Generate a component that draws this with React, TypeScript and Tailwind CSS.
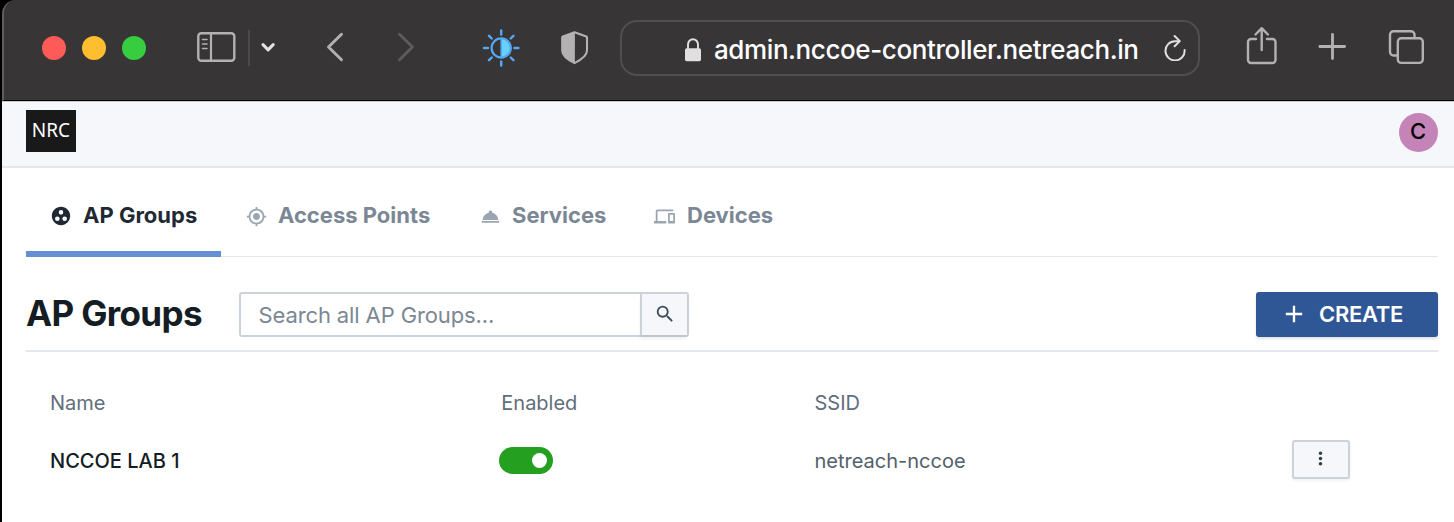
import type { ReactNode } from "react";
import {
  MdAdd,
  MdDevices,
  MdGpsFixed,
  MdGroupWork,
  MdMoreVert,
  MdRoomService,
  MdSearch,
} from "react-icons/md";

function BrowserBar() {
  return (
    <div className="flex h-[101px] items-start overflow-hidden rounded-tl-[14px] border-b border-l-2 border-b-black border-l-[#5f5d5e] bg-[#383536]">
      <div className="mt-9 ml-[38px] flex gap-4">
        <span className="size-6 rounded-full bg-[#fe5b58]" />
        <span className="size-6 rounded-full bg-[#febe30]" />
        <span className="size-6 rounded-full bg-[#36cd41]" />
      </div>
      <svg className="mt-8 ml-[51px] h-[30px] w-[39px] shrink-0" viewBox="0 0 39 30" fill="none" stroke="#b4b1b2">
        <rect x="1.3" y="1.3" width="36" height="27.4" rx="3" strokeWidth="2.4" />
        <path d="M14 1v28" strokeWidth="2.2" />
        <path d="M5.500 7.500h4.500M5.500 12h4.500M5.500 16.500h4.500" strokeWidth="1.600" strokeLinecap="round" />
      </svg>
      <span className="mt-[30px] ml-3 h-9 w-0.5 bg-[#4b494a]" />
      <svg className="mt-[42px] ml-[11px] h-[11px] w-[15px] shrink-0" viewBox="0 0 15 11" fill="none" stroke="#e4e2e3" strokeWidth="3" strokeLinecap="round" strokeLinejoin="round">
        <path d="M2 2.600 7.100 7.900 12.200 2.600" />
      </svg>
      <svg className="mt-8 ml-[49px] h-[30px] w-[19px] shrink-0" viewBox="0 0 19 30" fill="none" stroke="#b4b1b2" strokeWidth="2.900" strokeLinecap="round" strokeLinejoin="round">
        <path d="M16.500 2.200 3.500 15l13 12.800" />
      </svg>
      <svg className="mt-8 ml-[53px] h-[30px] w-[19px] shrink-0" viewBox="0 0 19 30" fill="none" stroke="#5d5b5c" strokeWidth="2.900" strokeLinecap="round" strokeLinejoin="round">
        <path d="M2.500 2.200 15.500 15 2.500 27.800" />
      </svg>
      <svg className="mt-[29px] ml-[66px] h-[38px] w-[38px] shrink-0" viewBox="0 0 38 38" fill="none" stroke="#55a8f2" strokeWidth="2.200">
        <path d="M19.200 9a10 10 0 0 1 0 20z" fill="#66d0ff" stroke="none" />
        <circle cx="19.200" cy="19" r="9.600" />
        <path d="M19.200 9v20" strokeWidth="1.600" />
        <path d="M19.200 1.500v4M19.200 32.500v4M2 19h4M32.400 19h4M7 6.800l2.700 2.700M28.700 28.500l2.700 2.700M7 31.200l2.700-2.700M28.700 9.500l2.700-2.700" strokeWidth="2.400" strokeLinecap="round" />
      </svg>
      <svg className="mt-[30px] ml-10 h-[35px] w-[29px] shrink-0" viewBox="0 0 29 35">
        <path d="M14.500 2.200 26.300 6.400q.7.300.7 1v13.200c0 5.600-6 9.400-12.500 12.500-6.500-3.100-12.300-6.900-12.300-12.500V7.400q0-.7.700-1z" fill="none" stroke="#b4b1b2" strokeWidth="2.100" strokeLinejoin="round" />
        <path d="M14.900 2.200 2.400 6.600V21c0 5 6 9 12.500 12z" fill="#b4b1b2" />
      </svg>
      <div className="mt-5 ml-[31px] flex h-14 w-[580px] shrink-0 items-start rounded-[17px] border-2 border-[#504e4f]">
        <svg className="mt-4 ml-[63px] h-6 w-4 shrink-0" viewBox="0 0 16 24">
          <path d="M3 12V6.500a5 5.300 0 0 1 10 0V12" fill="none" stroke="#e1dfe0" strokeWidth="1.900" />
          <rect x="0" y="10.300" width="16" height="13" rx="1.700" fill="#e1dfe0" />
        </svg>
        <span className="mt-[11px] ml-[13px] w-[428px] text-[26px] leading-[34px] font-medium tracking-[-0.4px] whitespace-nowrap text-white">
          admin.nccoe-controller.netreach.in
        </span>
        <svg className="mt-[13px] ml-[22px] h-[26px] w-[22px] shrink-0" viewBox="0 0 22 26" fill="none" stroke="#e1dfe0" strokeWidth="2" strokeLinecap="round" strokeLinejoin="round">
          <path d="M14 6.200H11A9.600 9.600 0 1 0 20.600 15" />
          <path d="M10.600 1 15.800 6.100 10.600 11.300" />
        </svg>
      </div>
      <svg className="mt-[26px] ml-[46px] h-[39px] w-[31px] shrink-0" viewBox="0 0 31 39" fill="none" stroke="#b4b1b2" strokeWidth="2.400" strokeLinecap="round" strokeLinejoin="round">
        <path d="M10 13H5a3 3 0 0 0-3 3v18a3 3 0 0 0 3 3h21.500a3 3 0 0 0 3-3V16a3 3 0 0 0-3-3H21" />
        <path d="M15.700 24V2.500M9.500 8.500l6.200-6.300 6.200 6.300" />
      </svg>
      <svg className="mt-[33px] ml-[41px] h-[27px] w-[28px] shrink-0" viewBox="0 0 28 27" fill="none" stroke="#b4b1b2" strokeWidth="2.800" strokeLinecap="round">
        <path d="M14.500 1.500v24M1.800 13.500h24.800" />
      </svg>
      <svg className="mt-[29px] ml-[42px] h-9 w-9 shrink-0" viewBox="0 0 36 36" fill="none" stroke="#b4b1b2" strokeWidth="2.400">
        <path d="M9 26.500H5.500A3.500 3.500 0 0 1 2 23V5.700A3.500 3.500 0 0 1 5.500 2.200H23a3.500 3.500 0 0 1 3.500 3.500V9" />
        <rect x="9.800" y="9.300" width="25" height="24.600" rx="3.500" />
      </svg>
    </div>
  );
}

function Tab({ icon, label, className }: { icon: ReactNode; label: string; className: string }) {
  return (
    <div className={"flex items-start gap-[11px] " + className}>
      {icon}
      <span className="mt-8 text-[22px] leading-[30px] font-bold whitespace-nowrap">{label}</span>
    </div>
  );
}

export default function App() {
  return (
    <div className="h-[522px] w-[1454px] overflow-hidden bg-black pl-0.5 font-['Inter',sans-serif]">
      <BrowserBar />
      <div className="h-[421px] bg-white">
        <header className="flex h-[67px] items-start justify-between border-t border-b-2 border-t-[#c9cacd] border-b-[#e4e7eb] bg-[#f5f7fb] pr-4 pl-6">
          <div className="mt-2 h-[42px] w-[50px] bg-[#191919] text-center font-['Noto_Sans',sans-serif] text-[19px] leading-[41px] text-white">
            NRC
          </div>
          <div className="mt-[11px] size-[39px] rounded-full bg-[#c584b8] pr-px text-center text-[22px] leading-[37px] font-medium text-black">
            C
          </div>
        </header>

        <nav className="mr-4 ml-6 flex h-[89px] border-b border-[#e4e7e9] text-[#7b8794]">
          <Tab
            icon={<MdGroupWork className="mt-[37px] size-[22px]" />}
            label="AP Groups"
            className="h-[89px] w-[195px] border-b-6 border-[#668ed1] pl-6 text-[#1f2933]"
          />
          <Tab
            icon={<MdGpsFixed className="mt-[38px] size-[21px] text-[#9aa5b1]" />}
            label="Access Points"
            className="w-[234px] pl-[25px]"
          />
          <Tab
            icon={<MdRoomService className="mt-[38px] size-[21px] text-[#9aa5b1]" />}
            label="Services"
            className="w-[174px] pl-[25px]"
          />
          <Tab
            icon={<MdDevices className="mt-[38px] mr-px size-[21px] text-[#9aa5b1]" />}
            label="Devices"
            className="pl-[25px]"
          />
        </nav>

        <div className="mr-4 ml-6 flex h-[95px] items-start border-b-2 border-[#e4e7eb] pt-[35px]">
          <h1 className="w-[213px] text-[35px] leading-[43px] font-bold tracking-[-0.65px] whitespace-nowrap text-[#141c24]">
            AP Groups
          </h1>
          <div className="flex h-[45px] w-[450px] rounded-[3px] border-2 border-[#cbd2d9]">
            <div className="w-[399px] pl-[17.5px] text-[22px] leading-[42px] tracking-[-0.12px] text-[#7b8794]">
              Search all AP Groups...
            </div>
            <button className="flex flex-1 justify-center border-l-2 border-[#cbd2d9] bg-[#f5f7fa] pt-[9px] text-[#3e4c59] shadow-[0_4px_3px_rgba(0,0,0,0.06)]">
              <MdSearch className="size-[22px]" />
            </button>
          </div>
          <button className="ml-auto flex h-[45px] w-[182px] items-start rounded-[3px] bg-[#305795] pl-6 text-[22px] font-semibold text-white shadow-[0_2px_3px_rgba(0,0,0,0.12)]">
            <MdAdd className="mt-2 size-7" />
            <span className="ml-[11px] leading-[44px] tracking-[-0.3px]">CREATE</span>
          </button>
        </div>

        <div className="grid grid-cols-[451px_313.5px_477.5px_1fr] pt-[36px] pl-12 text-[20px]">
          <div className="h-[52px] leading-[30px] text-[#616e7c]">Name</div>
          <div className="pl-[0.3px] leading-[30px] text-[#616e7c]">Enabled</div>
          <div className="leading-[30px] text-[#616e7c]">SSID</div>
          <div />
          <div className="pt-[6px] leading-[30px] font-medium text-[#141c24]">NCCOE LAB 1</div>
          <div>
            <div className="mt-[7px] -ml-0.5 flex h-[27px] w-[54px] items-center justify-end rounded-full bg-[#249f1f] pr-[6px]">
              <span className="size-[15px] rounded-full bg-white" />
            </div>
          </div>
          <div className="pt-[6px] leading-[30px] text-[#52606d]">netreach-nccoe</div>
          <button className="flex h-[39px] w-[58px] justify-center rounded-[3px] border-2 border-[#cbd2d9] bg-[#f5f7fa] pt-[6px] pr-0.5 text-[#323f4b] shadow-[0_2px_3px_rgba(0,0,0,0.06)]">
            <MdMoreVert className="size-[21px]" />
          </button>
        </div>
      </div>
    </div>
  );
}
